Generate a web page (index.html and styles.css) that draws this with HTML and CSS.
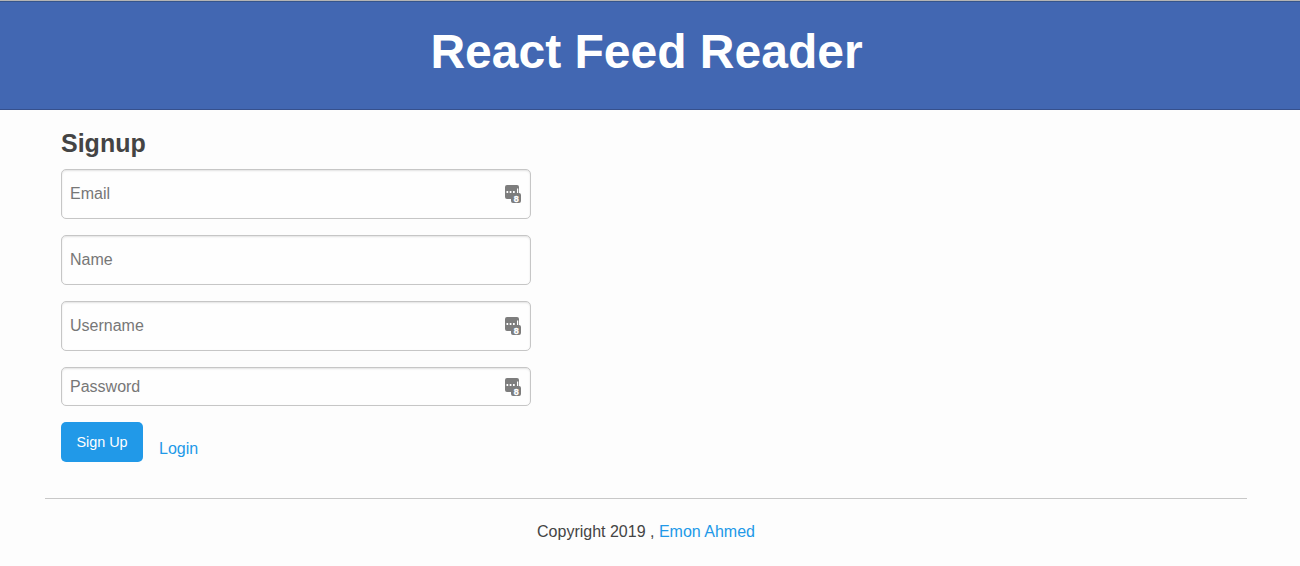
FILE: index.html
```
<!DOCTYPE html>
<html lang="en">
<head>
<meta charset="utf-8">
<title>React Feed Reader</title>
<link rel="stylesheet" href="styles.css">
</head>
<body>
<svg class="symbols" aria-hidden="true">
  <symbol id="key-icon" viewBox="0 0 16 18">
    <path fill="#7d7d7d" d="M2 0h10a2 2 0 0 1 2 2v6a2 2 0 0 1 2 2v6a2 2 0 0 1-2 2H8a2 2 0 0 1-2-2V14H2a2 2 0 0 1-2-2V2a2 2 0 0 1 2-2z"/>
    <path fill="#fff" d="M1.500 6h1.700v2H1.500zM4.700 6h1.700v2H4.700zM8 6h1.700v2H8zM12 3.500h1.200V8H12z"/>
    <text x="11.300" y="16.500" fill="#fff" stroke="#fff" stroke-width=".3" text-anchor="middle" font-family="Liberation Sans, Arial, sans-serif" font-size="9" font-weight="700">8</text>
  </symbol>
</svg>
<header class="banner"><h1 class="banner-title">React Feed Reader</h1></header>
<main class="container">
  <form class="signup">
    <h2 class="heading">Signup</h2>
    <div class="field"><input class="input" type="text" placeholder="Email"><svg class="key"><use href="#key-icon"/></svg></div>
    <div class="field"><input class="input" type="text" placeholder="Name"></div>
    <div class="field"><input class="input" type="text" placeholder="Username"><svg class="key"><use href="#key-icon"/></svg></div>
    <div class="field field-short"><input class="input" type="password" placeholder="Password"><svg class="key"><use href="#key-icon"/></svg></div>
    <div class="actions"><button class="button" type="button">Sign Up</button><a class="link login" href="#">Login</a></div>
  </form>
  <footer class="footer">Copyright 2019 , <a class="link" href="#">Emon Ahmed</a></footer>
</main>
</body>
</html>
```
FILE: styles.css
```
* { box-sizing: border-box; }
body {
  margin: 0;
  height: 566px;
  overflow: hidden;
  background: #fdfdfd;
  color: #444;
  font: 16px/24px "Liberation Sans", Arial, sans-serif;
}
.symbols { display: none; }
.banner {
  height: 110px;
  padding: 23px 7px 0 0;
  border-top: 1px solid #b4b4b4;
  border-bottom: 1px solid #36508c;
  background: #4267b2;
  box-shadow: inset 0 1px #36558c;
  text-align: center;
}
.banner-title {
  margin: 0;
  color: #fff;
  font-size: 48px;
  line-height: 56px;
}
.container { width: 1202px; margin-left: 45px; }
.signup {
  display: flex;
  flex-direction: column;
  gap: 16px;
  width: 486px;
  padding: 18px 0 36px 16px;
}
.heading {
  margin: 0 0 -5px;
  font-size: 25px;
  line-height: 30px;
}
.field {
  display: flex;
  position: relative;
  width: 470px;
  height: 50px;
}
.field-short { height: 39px; }
.input {
  width: 100%;
  padding: 0 8px;
  border: 1px solid #c6c6c6;
  border-radius: 5px;
  background: #fefefe;
  box-shadow: inset 0 1px 2px #e2e2e2;
  color: #444;
  font: inherit;
}
.input::placeholder { color: #777; opacity: 1; }
.key {
  position: absolute;
  top: 50%;
  right: 10px;
  width: 16px;
  height: 18px;
  margin-top: -9px;
}
.actions { display: flex; gap: 16px; height: 40px; }
.button {
  width: 82px;
  height: 40px;
  padding: 0;
  border: 0;
  border-radius: 5px;
  background: #2199e8;
  color: #fff;
  font: 14.4px "Liberation Sans", Arial, sans-serif;
}
.link { color: #2199e8; text-decoration: none; }
.login { margin-top: 15px; }
.footer {
  padding-top: 21px;
  border-top: 1px solid #c8c8c8;
  text-align: center;
}
```
